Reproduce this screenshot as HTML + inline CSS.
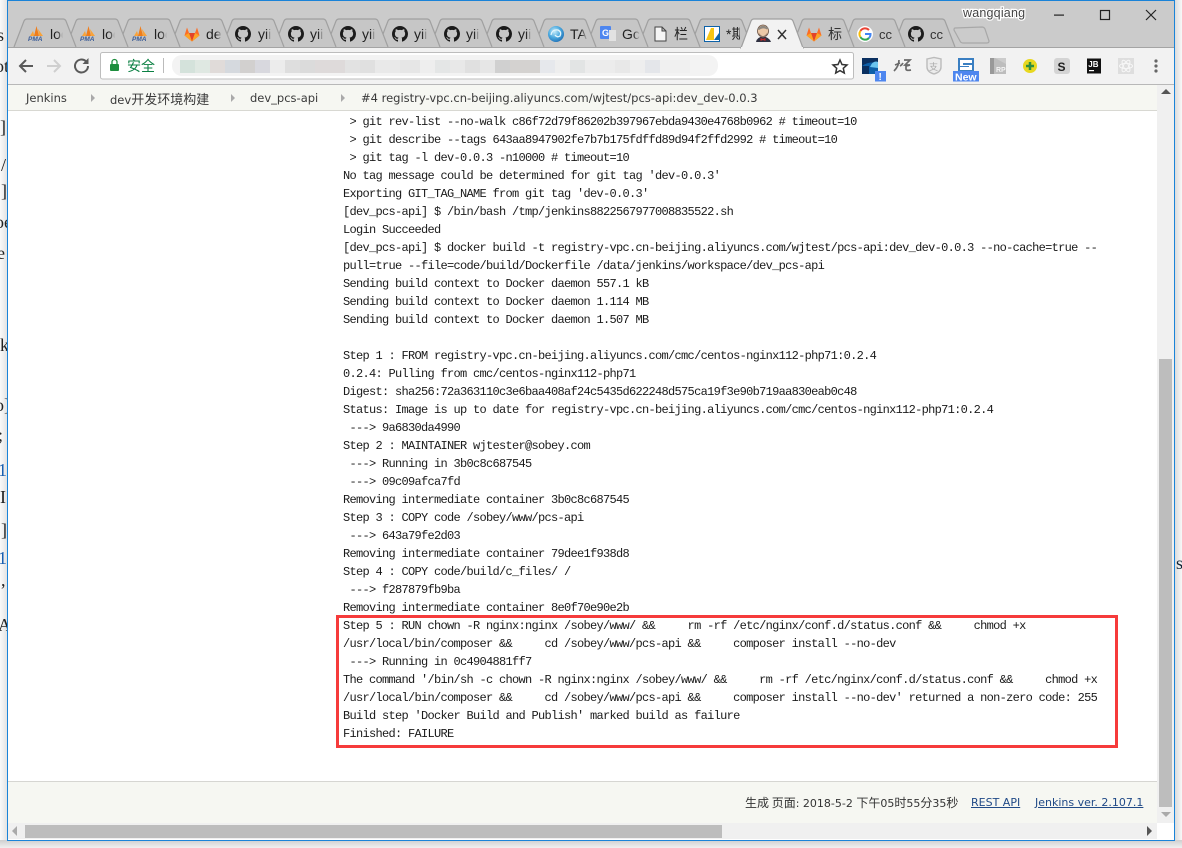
<!DOCTYPE html>
<html lang="zh"><head><meta charset="utf-8"><title>dev_pcs-api #4</title>
<style>
html,body{margin:0;padding:0;background:#e4e4e4}
body{width:1182px;height:848px;position:relative;overflow:hidden;font-family:"Liberation Sans","Noto Sans CJK SC",sans-serif}
.abs{position:absolute}
#bgL{left:0;top:0;width:8px;height:848px;background:linear-gradient(90deg,#fafafa,#e0e0e0)}
#bgR{left:1175px;top:0;width:7px;height:848px;background:linear-gradient(90deg,#dcdcdc,#f8f8f8)}
#bgB{left:0;top:840px;width:1182px;height:8px;background:linear-gradient(180deg,#cfcfcf,#f0f0f0)}
.frag{position:absolute;font:18px "Liberation Serif",serif;color:#222;line-height:18px;white-space:nowrap}
#clipL{left:0;top:0;width:7px;height:848px;overflow:hidden}
#win{left:7px;top:0;width:1166px;height:839px;border:1px solid #1a83d8;background:#fff;overflow:hidden}
#bread{left:8px;top:85px;width:1150px;height:25px;background:#f6f7f2;border-bottom:1px solid #d8d8d2;box-sizing:content-box}
.bc{position:absolute;top:90px;font:11.500px/17px "DejaVu Sans","Noto Sans CJK SC",sans-serif;color:#3a3a3a;white-space:nowrap}
.bc b{font:13px/17px "Noto Sans CJK SC",sans-serif}
.sep{position:absolute;top:94px;width:0;height:0;border-left:4px solid #aaa;border-top:4px solid transparent;border-bottom:4px solid transparent}
pre{position:absolute;left:343px;top:113px;margin:0;font:12px/18px "Liberation Mono",monospace;letter-spacing:-.7px;color:#1a1a1a}
#red{left:336px;top:615px;width:776px;height:127px;border:3px solid #f63b3b}
#foot{left:8px;top:781px;width:1150px;height:42px;background:#f6f7f2;border-top:1px solid #d6d6d2;box-sizing:border-box}
.ft{position:absolute;top:794px;font:11px/17px "DejaVu Sans","Noto Sans CJK SC",sans-serif;color:#333;white-space:nowrap}
.ft b{font:12px/17px "Noto Sans CJK SC",sans-serif}
.ft.l{color:#204a87;text-decoration:underline}
#vs{left:1157px;top:85px;width:17px;height:738px;background:#f0f0f0}
#vt{left:1159px;top:359px;width:13px;height:448px;background:#bdbdbd}
#hs{left:8px;top:823px;width:1149px;height:16px;background:#f0f0f0}
#ht{left:25px;top:825px;width:697px;height:13px;background:#bdbdbd}
#corner{left:1157px;top:823px;width:17px;height:16px;background:#fff}
</style></head><body>
<div class="abs" id="bgL"></div><div class="abs" id="bgR"></div><div class="abs" id="bgB"></div>
<div class="abs" id="clipL">
<span class="frag" style="left:-3px;top:26px">s</span>
<span class="frag" style="left:-5px;top:57px">ot</span>
<span class="frag" style="left:0;top:118px">]</span>
<span class="frag" style="left:1px;top:156px">/</span>
<span class="frag" style="left:1px;top:182px">]</span>
<span class="frag" style="left:-5px;top:213px">oe</span>
<span class="frag" style="left:-3px;top:244px">e</span>
<span class="frag" style="left:0;top:336px">k</span>
<span class="frag" style="left:-5px;top:396px">o]</span>
<span class="frag" style="left:-2px;top:426px">;</span>
<span class="frag" style="left:-2px;top:461px;color:#1a5fb0">1</span>
<span class="frag" style="left:0;top:488px">I</span>
<span class="frag" style="left:1px;top:521px">]</span>
<span class="frag" style="left:-2px;top:549px;color:#1a5fb0">1</span>
<span class="frag" style="left:1px;top:571px">,</span>
<span class="frag" style="left:-2px;top:616px">A</span>
</div>
<span class="frag" style="left:1176px;top:554px;color:#123">s.</span>
<div class="abs" id="win"></div>

<svg class="abs" style="left:8px;top:1px" width="1166" height="85" viewBox="8 1 1166 85" xmlns="http://www.w3.org/2000/svg">
<defs>
<linearGradient id="fade" x1="0" x2="1" y1="0" y2="0"><stop offset="0" stop-color="#222"/><stop offset=".62" stop-color="#222"/><stop offset="1" stop-color="#222" stop-opacity="0"/></linearGradient>
<linearGradient id="fade2" x1="0" x2="1" y1="0" y2="0"><stop offset="0" stop-color="#222"/><stop offset=".42" stop-color="#222"/><stop offset=".72" stop-color="#222" stop-opacity="0"/></linearGradient>
<radialGradient id="ball" cx=".4" cy=".35" r=".7"><stop offset="0" stop-color="#c6ecfa"/><stop offset=".55" stop-color="#4aa8de"/><stop offset="1" stop-color="#1f6fb5"/></radialGradient>
<clipPath id="c1"><rect x="720" y="20" width="20" height="26"/></clipPath>
<path id="tab" d="M0 28 L10 2 Q11 0 13 0 L49 0 Q51 0 52 2 L62 28" fill="#c6c6c6" stroke="#a0a0a0" stroke-width="1.2"/>
<path id="gh" d="M8 0C3.58 0 0 3.58 0 8c0 3.54 2.29 6.53 5.47 7.59.4.07.55-.17.55-.38 0-.19-.01-.82-.01-1.49-2.01.37-2.53-.49-2.69-.94-.09-.23-.48-.94-.82-1.13-.28-.15-.68-.52-.01-.53.63-.01 1.08.58 1.23.82.72 1.21 1.87.87 2.33.66.07-.52.28-.87.51-1.07-1.78-.2-3.64-.89-3.64-3.95 0-.87.31-1.59.82-2.15-.08-.2-.36-1.02.08-2.12 0 0 .67-.21 2.2.82.64-.18 1.32-.27 2-.27.68 0 1.36.09 2 .27 1.53-1.04 2.2-.82 2.2-.82.44 1.1.16 1.92.08 2.12.51.56.82 1.27.82 2.15 0 3.07-1.87 3.75-3.65 3.95.29.25.54.73.54 1.48 0 1.07-.01 1.93-.01 2.2 0 .21.15.46.55.38A8.013 8.013 0 0016 8c0-4.42-3.58-8-8-8z" fill="#1b1b1b"/>
<g id="fox"><path d="M8 15.5 L0.5 9.5 L3 1.5 L5 7 L11 7 L13 1.5 L15.5 9.5Z" fill="#fc6d26"/><path d="M8 15.500 L5 7 L11 7Z" fill="#e24329"/><path d="M8 15.500 L.5 9.500 L5 7Z M8 15.500 L15.500 9.500 L11 7Z" fill="#fca326"/></g>
<g id="pma"><path d="M2 11 L5 6 L6.500 11Z" fill="#f9a33a"/><path d="M6 11 L8.500 1 L11 11Z" fill="#f07d1a"/><path d="M11 11 L10 4 L15 11Z" fill="#f9a33a"/><text x="0" y="16" font-family="Liberation Sans" font-size="6.500" font-weight="bold" font-style="italic" fill="#3a5b96">PMA</text></g>
</defs>
<rect x="8" y="1" width="1166" height="47" fill="#cbcbcb"/>
<rect x="8" y="48" width="1166" height="37" fill="#f2f2f2"/>
<rect x="8" y="84" width="1166" height="1" fill="#b8b8b8"/>
<rect x="8" y="47" width="1166" height="1" fill="#a4a4a4"/>

<use href="#tab" x="893" y="19"/><use href="#tab" x="843" y="19"/><use href="#tab" x="792" y="19"/>
<use href="#tab" x="690" y="19"/><use href="#tab" x="638" y="19"/><use href="#tab" x="586" y="19"/><use href="#tab" x="534" y="19"/>
<use href="#tab" x="482" y="19"/><use href="#tab" x="430" y="19"/><use href="#tab" x="378" y="19"/><use href="#tab" x="326" y="19"/>
<use href="#tab" x="274" y="19"/><use href="#tab" x="222" y="19"/><use href="#tab" x="170" y="19"/><use href="#tab" x="118" y="19"/>
<use href="#tab" x="66" y="19"/><use href="#tab" x="14" y="19"/>
<path d="M741 48 L751 21 Q752 19 754 19 L790 19 Q792 19 793 21 L803 48Z" fill="#f2f2f2" stroke="#a0a0a0" stroke-width="1.2"/>
<rect x="741" y="47" width="62" height="2" fill="#f2f2f2"/>
<path d="M955 28 L982 27 Q984 27 985 29 L989 41 Q989 43 987 43 L963 43 Q961 43 960 41 L954 30 Q954 28 955 28Z" fill="#cbcbcb" stroke="#a8a8a8" stroke-width="1.2"/>

<use href="#pma" x="28" y="25"/><use href="#pma" x="80" y="25"/><use href="#pma" x="132" y="25"/>
<use href="#fox" x="184" y="26"/>
<use href="#gh" x="235" y="26"/><use href="#gh" x="288" y="26"/><use href="#gh" x="340" y="26"/><use href="#gh" x="392" y="26"/><use href="#gh" x="444" y="26"/><use href="#gh" x="496" y="26"/>
<circle cx="556" cy="34" r="8" fill="url(#ball)"/><path d="M551 35 Q552 29 558 30 Q562 32 560 36 Q557 38 555 35" fill="none" stroke="#e4f6fc" stroke-width="1.300"/>
<rect x="600" y="26" width="11" height="13" rx="1" fill="#4d86ef"/><path d="M609 30 h7 v11 h-7z" fill="#e2e2e2"/><text x="602" y="36" font-family="Liberation Sans" font-weight="bold" font-size="9" fill="#fff">G</text>
<path d="M655 27 H662 L666 31 V41 H655Z M662 27 V31 H666" fill="#f5f5f5" stroke="#444" stroke-width="1"/>
<rect x="704.500" y="26.500" width="15" height="15" fill="#fff" stroke="#0d62a8"/><path d="M706 40 L711 28 H714 V40Z" fill="#f6c413"/><path d="M714 40 L719 33 V40Z" fill="#0d62a8"/>
<g><path d="M756 42 Q757 37 763 36.500 Q769 37 771 42Z" fill="#2f3040"/><ellipse cx="763" cy="31" rx="5.500" ry="6" fill="#edc9a8" stroke="#6a5040" stroke-width=".8"/><path d="M757.500 29 Q762 23 768.500 28 L767 29.500 Q763 27 759 30Z" fill="#8e8880"/><path d="M759 33 Q763 39 767 33 Q767 37 763 37.500 Q759 37 759 33Z" fill="#8a7468"/><path d="M760.500 38 L763 39 L765.500 38 V41 L763 40 L760.500 41Z" fill="#c02a2a"/></g>
<use href="#fox" x="806" y="26"/>
<circle cx="865" cy="34" r="8" fill="#fff"/>
<g fill="none" stroke-width="2"><path d="M869 30 A5.500 5.500 0 0 0 860.400 31" stroke="#ea4335"/><path d="M860.400 31 A5.500 5.500 0 0 0 860.400 37" stroke="#fbbc05"/><path d="M860.400 37 A5.500 5.500 0 0 0 869 38" stroke="#34a853"/><path d="M869 38 A5.500 5.500 0 0 0 870.500 34 H865" stroke="#4285f4"/></g>
<use href="#gh" x="908" y="26"/>

<g font-family="Liberation Sans, Noto Sans CJK SC, sans-serif" font-size="14" fill="url(#fade)">
<text x="50" y="39" fill="url(#fade2)">loc</text><text x="102" y="39" fill="url(#fade2)">loc</text><text x="154" y="39" fill="url(#fade2)">loc</text><text x="206" y="39">de</text>
<text x="258" y="39">yii</text><text x="310" y="39">yii</text><text x="362" y="39">yii</text><text x="414" y="39">yii</text><text x="466" y="39">yii</text><text x="518" y="39">yii</text>
<text x="570" y="39">TA</text><text x="622" y="39">Gc</text>
<text x="674" y="39" fill="#222">栏</text><text x="726" y="39" fill="#222" clip-path="url(#c1)">*期</text>
<text x="828" y="39" fill="#333">标</text><text x="879" y="39" font-size="13" fill="#333">cc</text><text x="930" y="39" font-size="13" fill="#333">cc</text>
</g>
<path d="M778 30 L786 39 M786 30 L778 39" stroke="#333" stroke-width="1.500"/>

<text x="963" y="17" font-family="Liberation Sans" font-size="12.500" fill="#444" stroke="#fff" stroke-width="2.500" paint-order="stroke" letter-spacing=".2">wangqiang</text>
<rect x="1054" y="14.500" width="10" height="1.200" fill="#222"/>
<rect x="1100.500" y="10.500" width="9" height="9" fill="none" stroke="#222" stroke-width="1.200"/>
<path d="M1146 10 L1156 20 M1156 10 L1146 20" stroke="#222" stroke-width="1.200"/>

<path d="M33 66 H21 M26 60 L20 66 L26 72" fill="none" stroke="#5a5a5a" stroke-width="2"/>
<path d="M47 66 H59 M54 60 L60 66 L54 72" fill="none" stroke="#cfcfcf" stroke-width="2"/>
<path d="M88 66 A6.500 6.500 0 1 1 86 61.300" fill="none" stroke="#5a5a5a" stroke-width="2"/><path d="M88.500 58 V64 H82.500Z" fill="#5a5a5a"/>

<rect x="100.500" y="52.500" width="753" height="26.500" rx="2" fill="#fff" stroke="#bdbdbd"/>
<rect x="110" y="64" width="9" height="7" rx="1" fill="#1e8e3e"/><path d="M112 64 V62 A2.500 2.500 0 0 1 117 62 V64" fill="none" stroke="#1e8e3e" stroke-width="1.300"/>
<text x="127" y="71" font-family="Noto Sans CJK SC, sans-serif" font-size="14" fill="#0b8043">安全</text>
<rect x="163" y="58" width="1" height="15" fill="#bbb"/>

<rect x="172" y="55" width="546" height="21" rx="10" fill="#f3f3f3"/>
<g>
<rect x="180" y="60" width="15" height="13" fill="#d4e2db"/><rect x="195" y="60" width="15" height="13" fill="#dfe8e2"/><rect x="210" y="60" width="15" height="13" fill="#e0dbd9"/><rect x="225" y="60" width="15" height="13" fill="#d5d9de"/><rect x="240" y="60" width="15" height="13" fill="#d2d0cf"/><rect x="255" y="60" width="15" height="13" fill="#d8d8de"/><rect x="270" y="60" width="15" height="13" fill="#ececec"/><rect x="285" y="60" width="15" height="13" fill="#dedede"/><rect x="300" y="60" width="15" height="13" fill="#dbdbdb"/><rect x="315" y="60" width="30" height="13" fill="#dedada"/><rect x="345" y="60" width="15" height="13" fill="#e2e2e2"/><rect x="360" y="60" width="15" height="13" fill="#e0e0e0"/><rect x="375" y="60" width="25" height="13" fill="#e9e9e9"/><rect x="400" y="60" width="20" height="13" fill="#e6e6e6"/><rect x="420" y="60" width="15" height="13" fill="#eeeeee"/><rect x="435" y="60" width="15" height="13" fill="#e4e6e6"/><rect x="450" y="60" width="15" height="13" fill="#e8e8e8"/><rect x="465" y="60" width="15" height="13" fill="#e0e0e0"/><rect x="480" y="60" width="15" height="13" fill="#e6e6e6"/><rect x="495" y="60" width="15" height="13" fill="#d0d0d0"/><rect x="510" y="60" width="30" height="13" fill="#d4d2d0"/><rect x="540" y="60" width="15" height="13" fill="#e6e8ec"/><rect x="555" y="60" width="15" height="13" fill="#eeeeee"/><rect x="570" y="60" width="15" height="13" fill="#e2e4e4"/><rect x="585" y="60" width="30" height="13" fill="#ececec"/><rect x="615" y="60" width="15" height="13" fill="#e8e8e8"/><rect x="630" y="60" width="15" height="13" fill="#eeeeee"/><rect x="645" y="60" width="15" height="13" fill="#e4e6ea"/><rect x="660" y="60" width="30" height="13" fill="#f0f0f0"/>
</g>
<path d="M840 60 L842 64.500 L847 65 L843.300 68.300 L844.300 73 L840 70.600 L835.700 73 L836.700 68.300 L833 65 L838 64.500Z" fill="none" stroke="#333" stroke-width="1.500"/>

<rect x="862" y="58" width="16" height="16" rx="1" fill="#0d5fa8"/><path d="M862 58 h16 v5 q-9 -2 -16 3z" fill="#0a2f60"/><path d="M870 67 q3 -7 8 -5 v6z" fill="#6ac4ef"/><rect x="862" y="66" width="7" height="8" fill="#0a2f60"/>
<rect x="875" y="71" width="11" height="10.500" fill="#4d86ef"/><text x="878.500" y="80" font-family="Liberation Sans" font-weight="bold" font-size="10" fill="#fff">!</text>
<path d="M895 65 l5 -2 M899 60 q0 6 -5 11 M900 66 q2 -1 3 -3 M904 60 h6 q-3 3 -5 5 h5 q-3 1 -4 1 v3 q0 2 5 1" fill="none" stroke="#6a6a6a" stroke-width="1.700"/>
<path d="M927 59 L934 57.500 L941 59 V67 Q941 72 934 74 Q927 72 927 67Z" fill="#ececec" stroke="#bbb" stroke-width="1.400"/><text x="929" y="70" font-family="Noto Sans CJK SC,sans-serif" font-size="9" fill="#aaa">支</text>
<rect x="958" y="58" width="16" height="14" fill="#3a7fc2"/><path d="M960 60 H972 V63 H963 V65 H972 V70 H960 V67 H969 V66 H960Z" fill="#fff"/>
<rect x="953" y="71" width="26" height="10.500" fill="#4d86ef"/><text x="955" y="80.300" font-family="Liberation Sans" font-weight="bold" font-size="10.500" fill="#fff">New</text>
<rect x="990" y="58" width="16" height="16" fill="#bdbdbd"/><rect x="990" y="58" width="4" height="16" fill="#999"/><path d="M995 58 h11 v6z" fill="#ccc"/><text x="996" y="72" font-family="Liberation Sans" font-weight="bold" font-size="7" fill="#f4f4f4">RP</text>
<circle cx="1030" cy="66" r="7" fill="#e8d820"/><path d="M1030 62 v8 M1026 66 h8" stroke="#2f8f3f" stroke-width="2.500"/>
<rect x="1054" y="58" width="16" height="16" rx="3" fill="#d4d4d4"/><text x="1057.500" y="71" font-family="Liberation Sans" font-weight="bold" font-size="12" fill="#222">S</text>
<rect x="1087" y="58.500" width="14" height="15" fill="#111"/><text x="1088.300" y="67" font-family="Liberation Sans" font-weight="bold" font-size="8" fill="#fff">JB</text><rect x="1089" y="70" width="5" height="1.200" fill="#fff"/>
<rect x="1118" y="58" width="16" height="16" fill="#dedede"/><g fill="none" stroke="#f7f7f7" stroke-width="1"><ellipse cx="1126" cy="66" rx="6.500" ry="2.600"/><ellipse cx="1126" cy="66" rx="6.500" ry="2.600" transform="rotate(60 1126 66)"/><ellipse cx="1126" cy="66" rx="6.500" ry="2.600" transform="rotate(120 1126 66)"/></g>
<g fill="#666"><circle cx="1156" cy="61" r="1.600"/><circle cx="1156" cy="66" r="1.600"/><circle cx="1156" cy="71" r="1.600"/></g>
</svg>

<div class="abs" id="bread"></div>
<span class="bc" style="left:26px">Jenkins</span><i class="sep" style="left:91px"></i>
<span class="bc" style="left:110px">dev<b>开发环境构建</b></span><i class="sep" style="left:231px"></i>
<span class="bc" style="left:250px">dev_pcs-api</span><i class="sep" style="left:341px"></i>
<span class="bc" style="left:361px">#4 registry-vpc.cn-beijing.aliyuncs.com/wjtest/pcs-api:dev_dev-0.0.3</span>

<pre> &gt; git rev-list --no-walk c86f72d79f86202b397967ebda9430e4768b0962 # timeout=10
 &gt; git describe --tags 643aa8947902fe7b7b175fdffd89d94f2ffd2992 # timeout=10
 &gt; git tag -l dev-0.0.3 -n10000 # timeout=10
No tag message could be determined for git tag 'dev-0.0.3'
Exporting GIT_TAG_NAME from git tag 'dev-0.0.3'
[dev_pcs-api] $ /bin/bash /tmp/jenkins8822567977008835522.sh
Login Succeeded
[dev_pcs-api] $ docker build -t registry-vpc.cn-beijing.aliyuncs.com/wjtest/pcs-api:dev_dev-0.0.3 --no-cache=true --
pull=true --file=code/build/Dockerfile /data/jenkins/workspace/dev_pcs-api
Sending build context to Docker daemon 557.1 kB
Sending build context to Docker daemon 1.114 MB
Sending build context to Docker daemon 1.507 MB

Step 1 : FROM registry-vpc.cn-beijing.aliyuncs.com/cmc/centos-nginx112-php71:0.2.4
0.2.4: Pulling from cmc/centos-nginx112-php71
Digest: sha256:72a363110c3e6baa408af24c5435d622248d575ca19f3e90b719aa830eab0c48
Status: Image is up to date for registry-vpc.cn-beijing.aliyuncs.com/cmc/centos-nginx112-php71:0.2.4
 ---&gt; 9a6830da4990
Step 2 : MAINTAINER wjtester@sobey.com
 ---&gt; Running in 3b0c8c687545
 ---&gt; 09c09afca7fd
Removing intermediate container 3b0c8c687545
Step 3 : COPY code /sobey/www/pcs-api
 ---&gt; 643a79fe2d03
Removing intermediate container 79dee1f938d8
Step 4 : COPY code/build/c_files/ /
 ---&gt; f287879fb9ba
Removing intermediate container 8e0f70e90e2b
Step 5 : RUN chown -R nginx:nginx /sobey/www/ &amp;&amp;     rm -rf /etc/nginx/conf.d/status.conf &amp;&amp;     chmod +x
/usr/local/bin/composer &amp;&amp;     cd /sobey/www/pcs-api &amp;&amp;     composer install --no-dev
 ---&gt; Running in 0c4904881ff7
The command '/bin/sh -c chown -R nginx:nginx /sobey/www/ &amp;&amp;     rm -rf /etc/nginx/conf.d/status.conf &amp;&amp;     chmod +x
/usr/local/bin/composer &amp;&amp;     cd /sobey/www/pcs-api &amp;&amp;     composer install --no-dev' returned a non-zero code: 255
Build step 'Docker Build and Publish' marked build as failure
Finished: FAILURE</pre>
<div class="abs" id="red"></div>

<div class="abs" id="foot"></div>
<span class="ft" style="left:745px"><b>生成 页面</b>: 2018-5-2 <b>下午</b>05<b>时</b>55<b>分</b>35<b>秒</b></span>
<span class="ft l" style="left:971px">REST API</span>
<span class="ft l" style="left:1035px">Jenkins ver. 2.107.1</span>

<div class="abs" id="vs"></div><div class="abs" id="vt"></div>
<div class="abs" style="left:1161px;top:89px;width:0;height:0;border-left:5px solid transparent;border-right:5px solid transparent;border-bottom:5px solid #555"></div>
<div class="abs" style="left:1161px;top:812px;width:0;height:0;border-left:5px solid transparent;border-right:5px solid transparent;border-top:5px solid #aaa"></div>
<div class="abs" id="hs"></div><div class="abs" id="ht"></div>
<div class="abs" style="left:12px;top:826px;width:0;height:0;border-top:5px solid transparent;border-bottom:5px solid transparent;border-right:5px solid #aaa"></div>
<div class="abs" style="left:1147px;top:826px;width:0;height:0;border-top:5px solid transparent;border-bottom:5px solid transparent;border-left:5px solid #555"></div>
<div class="abs" id="corner"></div>
</body></html>
